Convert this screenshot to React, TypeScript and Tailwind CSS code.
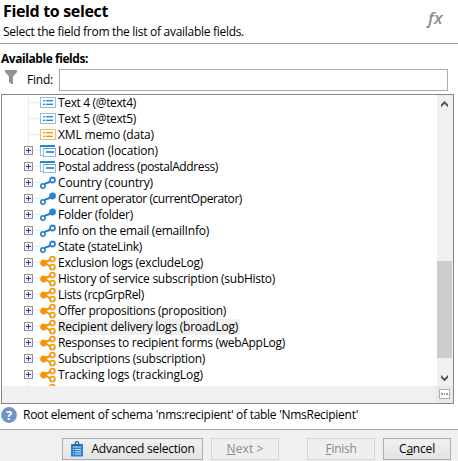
import { useLayoutEffect, useRef } from "react";
import type { ReactNode } from "react";

/** Single-line label whose tracking is adjusted so that it fills `width` pixels. */
function Label({ width, className = "", children }: { width: number; className?: string; children: ReactNode }) {
  const ref = useRef<HTMLSpanElement>(null);
  useLayoutEffect(() => {
    const el = ref.current;
    if (!el) return;
    el.style.letterSpacing = "0px";
    const natural = el.getBoundingClientRect().width;
    const count = (el.textContent ?? "").length;
    el.style.letterSpacing = `${(width - natural) / count}px`;
  }, [width]);
  return (
    <span ref={ref} className={`inline-block whitespace-pre ${className}`}>
      {children}
    </span>
  );
}

type Kind = "field" | "memo" | "group" | "link" | "linkKey" | "many";

function RowIcon({ kind }: { kind: Kind }) {
  if (kind === "field" || kind === "memo") {
    const c = kind === "field" ? "#2a83d0" : "#f09609";
    const b = kind === "field" ? "#8ebdf0" : "#f7bd62";
    return (
      <svg width="16" height="16" viewBox="0 0 16 16" shapeRendering="crispEdges">
        <rect x="0.5" y="2.5" width="15" height="10" fill="#fff" stroke={b} />
        <path d="M3 5h2v1H3zM6 5h7v1H6zM3 9h2v1H3zM6 9h7v1H6z" fill={c} />
        <path d="M3 6h2v1H3zM6 6h7v1H6zM3 8h2v1H3zM6 8h7v1H6z" fill={c} opacity=".35" />
      </svg>
    );
  }
  if (kind === "group") {
    return (
      <svg width="16" height="16" viewBox="0 0 16 16" shapeRendering="crispEdges">
        <path d="M0 2h15v2H0z" fill="#2a83d0" />
        <path d="M0 4h1v8h2v1H0z" fill="#8ebdf0" />
        <rect x="3.5" y="5.5" width="12" height="8" fill="#fff" stroke="#8ebdf0" />
        <path d="M3 5h13v1H3z" fill="#5ea2e3" />
        <path d="M6 8h8v2H6z" fill="#4b97dc" />
      </svg>
    );
  }
  if (kind === "link" || kind === "linkKey") {
    return (
      <svg width="16" height="16" viewBox="0 0 16 16" fill="none" stroke="#2a83d0">
        <path d="M4.6 9.2C6.5 7.2 8 8.8 10.2 6" strokeWidth="2.1" />
        <circle cx="2.9" cy="11" r="2.1" strokeWidth="1.7" fill="#fff" />
        <circle cx="12.5" cy="5" r="2.5" strokeWidth="1.8" fill={kind === "linkKey" ? "#2a83d0" : "#fff"} />
      </svg>
    );
  }
  return (
    <svg width="16" height="16" viewBox="0 0 16 16" fill="none" stroke="#f09609" className="overflow-visible">
      <path d="M3.5 8L10.5 4.8M4 8.3C8 8 8 11.6 11 11.8" strokeWidth="2.1" />
      <circle cx="3.7" cy="8" r="3.2" fill="#f09609" strokeWidth="0.6" />
      <circle cx="12.4" cy="4" r="2.5" fill="#fff" strokeWidth="1.7" />
      <circle cx="12.4" cy="12" r="2.5" fill="#fff" strokeWidth="1.7" />
    </svg>
  );
}

function Expander() {
  return (
    <svg width="9" height="9" viewBox="0 0 9 9" shapeRendering="crispEdges" className="shrink-0">
      <rect x="0.5" y="0.5" width="8" height="8" fill="#f4f4f4" stroke="#919191" />
      <path d="M2 4h5v1H2zM4 2h1v5H4z" fill="#2f479c" />
    </svg>
  );
}

const rows: { text: string; kind: Kind; w: number; selected?: boolean }[] = [
  { text: "Text 4 (@text4)", kind: "field", w: 78 },
  { text: "Text 5 (@text5)", kind: "field", w: 78 },
  { text: "XML memo (data)", kind: "memo", w: 96 },
  { text: "Location (location)", kind: "group", w: 100 },
  { text: "Postal address (postalAddress)", kind: "group", w: 160 },
  { text: "Country (country)", kind: "link", w: 95 },
  { text: "Current operator (currentOperator)", kind: "linkKey", w: 184 },
  { text: "Folder (folder)", kind: "linkKey", w: 75 },
  { text: "Info on the email (emailInfo)", kind: "link", w: 151 },
  { text: "State (stateLink)", kind: "link", w: 84 },
  { text: "Exclusion logs (excludeLog)", kind: "many", w: 145 },
  { text: "History of service subscription (subHisto)", kind: "many", w: 217 },
  { text: "Lists (rcpGrpRel)", kind: "many", w: 86 },
  { text: "Offer propositions (proposition)", kind: "many", w: 168 },
  { text: "Recipient delivery logs (broadLog)", kind: "many", w: 180, selected: true },
  { text: "Responses to recipient forms (webAppLog)", kind: "many", w: 227 },
  { text: "Subscriptions (subscription)", kind: "many", w: 147 },
  { text: "Tracking logs (trackingLog)", kind: "many", w: 145 },
];

function TreeRow({ text, kind, w, selected }: (typeof rows)[number]) {
  const leaf = kind === "field" || kind === "memo";
  return (
    <div className="flex h-4 shrink-0 items-center">
      <div className="flex h-[15px] w-[38px] shrink-0 items-center self-start">
        {leaf ? (
          <span className="ml-[26px] h-px w-3 bg-[#ececec]" />
        ) : (
          <>
            <span className="ml-[22px] flex">
              <Expander />
            </span>
            <span className="h-px w-[7px] bg-[#ececec]" />
          </>
        )}
      </div>
      <div className="flex h-4 w-4 shrink-0 items-center justify-center overflow-visible">
        <RowIcon kind={kind} />
      </div>
      <div className={`ml-0.5 flex h-4 items-center pr-0.5 leading-4 ${selected ? "bg-[#f0f0f0]" : ""}`}>
        <Label width={w}>{text}</Label>
      </div>
    </div>
  );
}

function Button({ className, disabled, children }: { className: string; disabled?: boolean; children: ReactNode }) {
  return (
    <button
      className={`flex h-[22px] shrink-0 items-center justify-center border ${
        disabled
          ? "border-[#d5d5d5] bg-[#efefef] text-[#8a8a8a]"
          : "border-[#adadad] bg-linear-to-b from-[#f1f1f1] to-[#e3e3e3] text-black"
      } ${className}`}
    >
      {children}
    </button>
  );
}

export default function App() {
  return (
    <div className="flex h-[461px] w-[458px] flex-col overflow-hidden bg-white font-['Open_Sans','Noto_Sans',sans-serif] text-[12px] text-black">
      <header className="flex h-11 shrink-0 justify-between border-b border-[#a0a0a0] pl-[3px]">
        <div className="flex flex-col">
          <h1 className="h-6 text-[16px] leading-[23px] font-bold">
            <Label width={105}>Field to select</Label>
          </h1>
          <p className="h-4 leading-4">
            <Label width={241}>Select the field from the list of available fields.</Label>
          </p>
        </div>
        <div className="mt-1.5 mr-[15px] text-[17px] leading-6 font-semibold text-[#8b8b8b] italic">
          <Label width={15}>fx</Label>
        </div>
      </header>

      <div className="flex h-[25px] shrink-0 items-end pl-px leading-[18px] font-bold">
        <Label width={87} className="mb-px">Available fields:</Label>
      </div>

      <div className="flex h-[22px] shrink-0 items-center">
        <svg width="12" height="15" viewBox="0 0 12 15" className="mr-2.5 ml-[5px] shrink-0 self-start">
          <path d="M0 1h12v2L8 7.5V15H6.5L4 13V7.5L0 3z" fill="#929292" />
        </svg>
        <div className="w-8 shrink-0 leading-4">
          <Label width={26} className="-mt-1">Find:</Label>
        </div>
        <input className="h-[22px] w-[389px] border border-[#ababab] bg-white outline-none" />
      </div>

      <div className="mt-[3px] ml-px flex h-[310px] w-[453px] shrink-0 flex-col border border-[#828790]">
        <div className="flex h-[291px] shrink-0">
          <div className="flex min-w-0 flex-1 flex-col overflow-hidden bg-[linear-gradient(#ececec,#ececec)] bg-[length:1px_100%] bg-[position:26px_0] bg-no-repeat">
            {rows.map((r) => (
              <TreeRow key={r.text} {...r} />
            ))}
            {/* top edge of the next row's icon, cut off by the viewport */}
            <div className="h-4 shrink-0 pl-[38px]">
              <RowIcon kind="many" />
            </div>
          </div>
          <div className="flex w-4 shrink-0 flex-col items-center bg-[#f0f0f0]">
            <svg width="16" height="16" viewBox="0 0 16 16" className="shrink-0">
              <path d="M4 9.5L7.5 6L11 9.5v2.8L7.5 8.8L4 12.3z" fill="#505050" />
            </svg>
            <div className="mt-[150px] h-[97px] w-[15px] shrink-0 self-start bg-[#cdcdcd]" />
            <svg width="16" height="16" viewBox="0 0 16 16" className="mt-3 shrink-0">
              <path d="M4 5L7.5 8.5L11 5v2.8L7.5 11.3L4 7.8z" fill="#505050" />
            </svg>
          </div>
        </div>
        <div className="flex flex-1 justify-end bg-[#f0f0f0]">
          <div className="flex w-[17px] items-start bg-[#e8e8e8] pt-[3px] pl-[3px]">
            <svg width="11" height="10" viewBox="0 0 11 10" shapeRendering="crispEdges">
              <rect x="0.5" y="0.5" width="10" height="9" fill="#fff" stroke="#b0b0b0" />
              <path d="M2 4h2v2H2zM5 4h1v2H5zM7 4h2v2H7z" fill="#999" />
            </svg>
          </div>
        </div>
      </div>

      <div className="flex h-[25px] shrink-0 items-center pl-px">
        <svg width="16" height="16" viewBox="0 0 16 16" className="mr-1.5 mb-1 shrink-0">
          <circle cx="8" cy="8" r="7.9" fill="#6f93c6" />
          <text x="8" y="12.7" textAnchor="middle" fill="#fff" fontSize="13" fontWeight="700">?</text>
        </svg>
        <Label width={335} className="-mt-1">Root element of schema 'nms:recipient' of table 'NmsRecipient'</Label>
      </div>

      <footer className="flex h-8 shrink-0 border-t border-[#a0a0a0] bg-[#f0f0f0] pt-2 pl-[62px]">
        <Button className="mr-2 w-[141px]">
          <svg width="12" height="16" viewBox="0 0 12 16" className="mr-[9px] shrink-0">
            <path d="M0 3h12v12.5H0z" fill="#2a83d0" />
            <circle cx="6" cy="2.5" r="1.8" fill="none" stroke="#2465a8" strokeWidth="1.2" />
            <path d="M2 3h8v2.5H2z" fill="#2465a8" />
            <path d="M2 5.5h8v.9H2zM2 8h1v1H2zM4 8h6v1H4zM2 10.3h1v1H2zM4 10.3h6v1H4zM2 12.6h1v1H2zM4 12.6h6v1H4z" fill="#cfe4f7" />
          </svg>
          <Label width={103}>Advanced selection</Label>
        </Button>
        <Button className="mr-7 w-[68px]" disabled>
          <Label width={37}><u>N</u>ext &gt;</Label>
        </Button>
        <Button className="mr-2 w-[68px]" disabled>
          <Label width={31}><u>F</u>inish</Label>
        </Button>
        <Button className="w-[68px]">
          <Label width={36}>C<u>a</u>ncel</Label>
        </Button>
      </footer>
    </div>
  );
}
